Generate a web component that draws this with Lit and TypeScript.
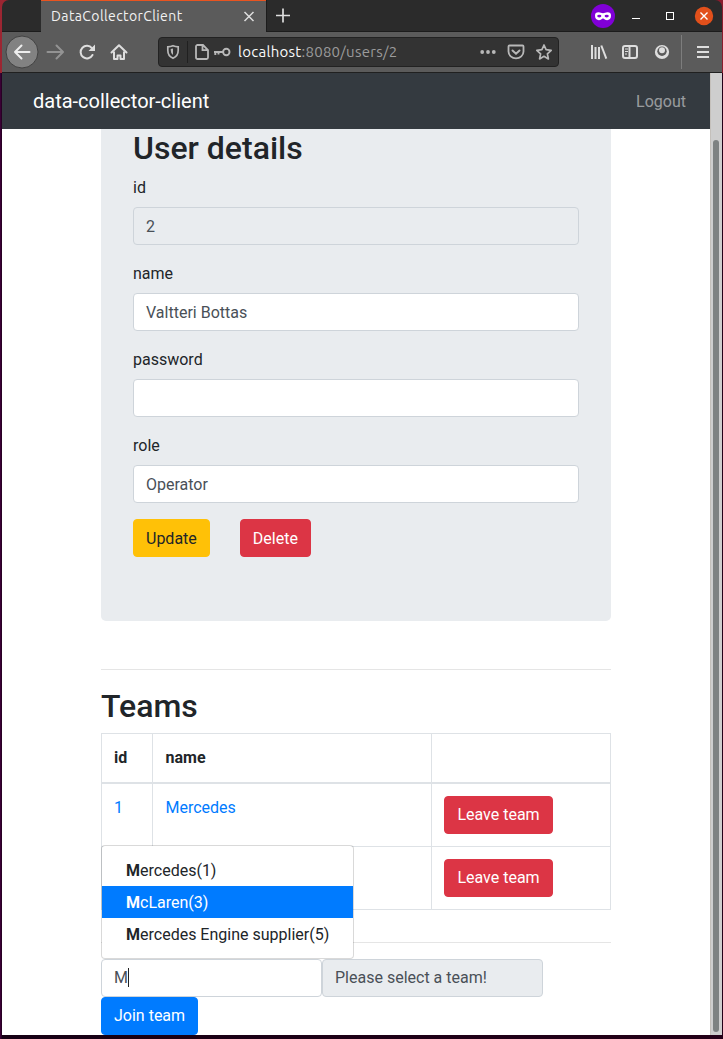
import { LitElement, html, css } from "lit";
import { customElement } from "lit/decorators.js";

@customElement("browser-chrome")
class BrowserChrome extends LitElement {
  static styles = css`
    :host { display: block; font-family: Ubuntu, "Noto Sans", sans-serif; color: #f2f2f2; }
    svg { display: block; flex: none; fill: none; stroke: #dedede; stroke-width: 2; }
    .tabs { display: flex; height: 32px; box-sizing: border-box; background: #2b2b2b; border-radius: 7px 7px 0 0; overflow: hidden; }
    .lead { width: 39px; box-sizing: border-box; border-bottom: 1px solid #1c1c1c; }
    .tab { width: 225px; box-sizing: border-box; border-top: 1px solid #e95420; background: #5b5b5b; display: flex; align-items: center; padding: 0 11px 0 10px; }
    .title { flex: 1; font-size: 14.5px; line-height: 20px; letter-spacing: -0.07px; white-space: nowrap; padding-bottom: 2px; }
    .title { font-size: 14px; letter-spacing: 0.4px; }
    .rest { flex: 1; display: flex; align-items: center; border-left: 1px solid #1c1c1c; border-bottom: 1px solid #1c1c1c; padding: 0 8px 0 8px; box-sizing: border-box; }
    .plus { margin-right: auto; }
    .min { margin: 0 10px 0 9px; }
    .close { margin-left: 12px; }
    .bar { height: 41px; box-sizing: border-box; border-bottom: 1px solid #202020; background: #5b5b5b; display: flex; align-items: center; padding-left: 3px; }
    .dim { stroke: #939393; }
    .url { margin-left: 23px; width: 401px; height: 30px; box-sizing: border-box; border: 1px solid #222; border-radius: 4px; background: #333; display: flex; align-items: center; padding: 0 0 0 5px; }
    .url svg { stroke: #b8b8b8; }
    .sep { width: 1px; height: 22px; background: #202020; margin: 0 4px 0 5px; }
    .key { margin-left: 2px; }
    .dots { margin-right: 5px; }
    .addr { flex: 1; font-size: 15px; letter-spacing: 0.27px; line-height: 20px; white-space: nowrap; margin-left: 6px; color: #9b9b9b; }
    .addr b { font-weight: 400; color: #fafafa; }
    .tools { display: flex; margin-left: 27px; gap: 8px; }
    .vsep { width: 1px; height: 34px; background: #7d7d7d; margin: 0 9px 0 7px; }
  `;
  render() {
    return html`
      <div class="tabs">
        <div class="lead"></div>
        <div class="tab">
          <span class="title">DataCollectorClient</span>
          <svg width="12" height="12"><path d="M1.5 1l9 9M10.5 1l-9 9" stroke-width="1.5"/></svg>
        </div>
        <div class="rest">
          <svg class="plus" width="16" height="16"><path d="M8 .5v14M1 7.500h14" stroke-width="1.7"/></svg>
          <svg width="24" height="24"><circle cx="12" cy="12" r="12" fill="#8000d7" stroke="none"/><path d="M4 11.800c0-2.800 1.200-3.600 3.500-3.600 2 0 3 1 4.500 1s2.500-1 4.500-1c2.300 0 3.500.8 3.500 3.600 0 2.900-1.700 4.400-3.800 4.400-2.200 0-2.900-1.800-4.200-1.800s-2 1.800-4.200 1.800c-2.100 0-3.800-1.500-3.800-4.400z" fill="#fff" stroke="none"/><ellipse cx="8.300" cy="12.100" rx="2.100" ry="1.300" fill="#8000d7" stroke="none"/><ellipse cx="15.700" cy="12.100" rx="2.100" ry="1.300" fill="#8000d7" stroke="none"/></svg>
          <svg class="min" width="24" height="24"><path d="M8 14.500h8" stroke="#fff" stroke-width="1"/></svg>
          <svg width="24" height="24"><rect x="8.500" y="8.500" width="7" height="7" stroke="#fff" stroke-width="1"/></svg>
          <svg class="close" width="20" height="20"><circle cx="10" cy="10" r="9.200" fill="#e2501b" stroke="none"/><path d="M6.500 6.500l7 7M13.500 6.500l-7 7" stroke="#fff" stroke-width="1.400"/></svg>
        </div>
      </div>
      <div class="bar">
        <svg width="34" height="34"><circle cx="17" cy="17" r="16" fill="#828282" stroke="#424242" stroke-width="1"/><path d="M24.500 17H10M16.500 10.500L10 17l6.500 6.500" stroke="#eee" stroke-linecap="round" stroke-linejoin="round"/></svg>
        <svg class="dim" width="32" height="32"><path d="M8.500 16h15M17.500 9.500l6.500 6.500-6.500 6.500" stroke-linecap="round" stroke-linejoin="round"/></svg>
        <svg width="32" height="32"><path d="M21.500 19a6.300 6.300 0 1 1-.6-6.800" stroke-linecap="round"/><path d="M24 8.500v6.500h-6.500z" fill="#dedede" stroke="none"/></svg>
        <svg width="32" height="32"><path d="M8.500 16.500l7.500-7.300 7.500 7.300" stroke-linecap="round" stroke-linejoin="round"/><path d="M11 15.500V23h3.500v-3.500h3V23H21v-7.500" stroke-linejoin="round"/></svg>
        <div class="url">
          <svg width="18" height="18"><path d="M3.800 3.800Q6.500 3.600 9 2.700q2.500.9 5.200 1.100v3.500q0 5.800-5.200 8Q3.800 13.100 3.800 7.300z" stroke-width="1.700"/><path d="M9 5.500v6.600Q6.700 10.500 6.700 7V6z" fill="#b8b8b8" stroke="none"/></svg>
          <div class="sep"></div>
          <svg width="18" height="18"><path d="M5 2h6l5 5v7.500a1.500 1.500 0 0 1-1.500 1.500h-9A1.500 1.500 0 0 1 4 14.500V3.500A1.500 1.500 0 0 1 5 2zM10.500 2.200v5h5.200" stroke-width="1.800"/></svg>
          <svg class="key" width="20" height="18"><circle cx="14.300" cy="9" r="3.200" stroke-width="1.900"/><path d="M11 9H2M3.300 9v3M6.500 9v2.500" stroke-width="1.900"/></svg>
          <span class="addr"><b>localhost</b>:8080/users/2</span>
          <svg class="dots" width="18" height="18"><g fill="#b8b8b8" stroke="none"><circle cx="3.200" cy="9" r="1.900"/><circle cx="9" cy="9" r="1.900"/><circle cx="14.800" cy="9" r="1.900"/></g></svg>
          <svg width="28" height="20" viewBox="-1 0 28 20"><path d="M6.500 3.500h13a1 1 0 0 1 1 1v5a7.500 6.800 0 0 1-15 0v-5a1 1 0 0 1 1-1z" stroke-width="1.800"/><path d="M9.500 8.500l3.500 3.200 3.500-3.200" stroke-linecap="round"/></svg>
          <svg width="28" height="20"><path d="M14 3l2.100 4.700 5.100.6-3.800 3.500 1 5.100-4.400-2.600-4.400 2.600 1-5.100-3.800-3.500 5.100-.6z" stroke-width="1.700" stroke-linejoin="round"/></svg>
        </div>
        <div class="tools">
          <svg width="24" height="24"><path d="M6 5v14M9.500 7v12M13 7v12"/><path d="M15.300 5.500l5 13.200"/></svg>
          <svg width="24" height="24"><rect x="5" y="6" width="14" height="12" rx="2"/><path d="M11.500 6v12"/><path d="M7 9h3M7 11.500h3M7 14h2" stroke-width="1"/></svg>
          <svg width="24" height="24"><circle cx="12" cy="12" r="7.100" fill="#dedede" stroke="none"/><circle cx="12" cy="11.200" r="4.700" fill="#5b5b5b" stroke="none"/><circle cx="12" cy="10.200" r="3" fill="#dedede" stroke="none"/></svg>
        </div>
        <div class="vsep"></div>
        <svg width="24" height="24"><path d="M6 7h12M6 12h12M6 17h12"/></svg>
      </div>`;
  }
}

@customElement("app-root")
class AppRoot extends LitElement {
  static styles = css`
    :host { display: block; width: 723px; height: 1039px; overflow: hidden; box-sizing: border-box; padding: 0 1px 4px 2px; background: linear-gradient(90deg, #3a0035 0, #3a0035 1px, #160014 2px, #240018 100%); font: 400 16px/24px Roboto, sans-serif; color: #212529; }
    .edge { display: block; background: linear-gradient(90deg, #9c2632, #3d0a22 50%, #8b1c2d); margin: 0 -1px 0 -2px; padding: 0 1px 0 2px; }
    .view { display: flex; height: 962px; overflow: hidden; background: #fff; }
    .page { width: 708px; }
    nav { height: 56px; background: #343a40; display: flex; align-items: center; justify-content: space-between; padding: 0 24px 0 31px; box-sizing: border-box; }
    .brand { color: #fff; font-size: 20px; line-height: 30px; }
    .logout { color: rgba(255, 255, 255, 0.5); padding-top: 2px; }
    .scroll { width: 12px; box-sizing: border-box; background: #cecece; border-left: 1px solid #c4c0bb; padding: 67px 3px 3px 2px; }
    .thumb { height: 892px; background: #7e8282; border-radius: 3px; }
    main { width: 510px; margin-left: 99px; }
    .card { height: 492px; box-sizing: border-box; padding: 0 32px; background: #e9ecef; border-radius: 0 0 5px 5px; }
    h2 { margin: 0 0 8px; font-size: 32px; line-height: 38px; font-weight: 500; }
    label { display: block; box-sizing: border-box; height: 24px; padding-top: 1px; margin-bottom: 8px; }
    .field { height: 38px; box-sizing: border-box; padding: 6px 12px; border: 1px solid #ced4da; border-radius: 4px; background: #fff; color: #495057; margin-bottom: 16px; white-space: nowrap; }
    .card .field { padding-top: 7px; }
    .off { background: #e9ecef; }
    .btn { display: inline-block; box-sizing: border-box; font: inherit; height: 38px; padding: 6px 12px; border: 1px solid; border-radius: 4px; margin: 0; }
    .row { display: flex; gap: 30px; }
    .row .btn { padding: 7px 12px 5px; }
    .warn { background: #ffc107; border-color: #ffc107; color: #212529; }
    .danger { background: #dc3545; border-color: #dc3545; color: #fff; }
    .leave { width: 109px; white-space: nowrap; }
    .primary { background: #007bff; border-color: #007bff; color: #fff; }
    .rule { height: 1px; background: #e5e5e5; }
    .first { margin: 48px 0 17px; }
    .second { margin: 32px 0 16px; }
    .table { display: grid; grid-template-columns: 51px 279px 179px; border: 1px solid #dee2e6; border-width: 1px 0 0 1px; }
    .cell { box-sizing: border-box; padding: 12px; border-right: 1px solid #dee2e6; border-bottom: 1px solid #dee2e6; height: 63px; color: #007bff; }
    .name { padding-left: 12.5px; }
    .head { height: 50px; border-bottom-width: 2px; color: #212529; font-weight: 700; }
    .join { display: flex; position: relative; }
    .join .field { width: 221px; margin: 0; }
    .caret { display: inline-block; width: 1px; height: 19px; background: #222; vertical-align: -4px; }
    .menu { position: absolute; left: 0; bottom: 100%; width: 253px; height: 114px; box-sizing: border-box; padding: 8px 0; border: 1px solid rgba(0, 0, 0, 0.15); background: #fff; background-clip: padding-box; border-radius: 4px; }
    .item { padding: 5px 24px 3px; white-space: nowrap; }
    .active { background: #007bff; color: #fff; }
  `;
  render() {
    const fields = [["id", "2"], ["name", "Valtteri Bottas"], ["password", ""], ["role", "Operator"]];
    const teams = [["1", "Mercedes"], ["", ""]];
    const options = ["ercedes(1)", "cLaren(3)", "ercedes Engine supplier(5)"];
    return html`
      <div class="edge"><browser-chrome></browser-chrome></div>
      <div class="view">
        <div class="page">
          <nav><span class="brand">data-collector-client</span><span class="logout">Logout</span></nav>
          <main>
            <section class="card">
              <h2>User details</h2>
              ${fields.map(([k, v], i) => html`<label>${k}</label><div class="field ${i === 0 ? "off" : ""}">${v}</div>`)}
              <div class="row"><button class="btn warn">Update</button><button class="btn danger">Delete</button></div>
            </section>
            <div class="rule first"></div>
            <h2>Teams</h2>
            <div class="table">
              <div class="cell head">id</div><div class="cell name head">name</div><div class="cell head"></div>
              ${teams.map(([id, name]) => html`<div class="cell">${id}</div><div class="cell name">${name}</div><div class="cell"><button class="btn danger leave">Leave team</button></div>`)}
            </div>
            <div class="rule second"></div>
            <div class="join">
              <div class="field">M<span class="caret"></span></div>
              <div class="field off">Please select a team!</div>
              <div class="menu">${options.map((o, i) => html`<div class="item ${i === 1 ? "active" : ""}"><b>M</b>${o}</div>`)}</div>
            </div>
            <button class="btn primary">Join team</button>
          </main>
        </div>
        <div class="scroll"><div class="thumb"></div></div>
      </div>`;
  }
}
